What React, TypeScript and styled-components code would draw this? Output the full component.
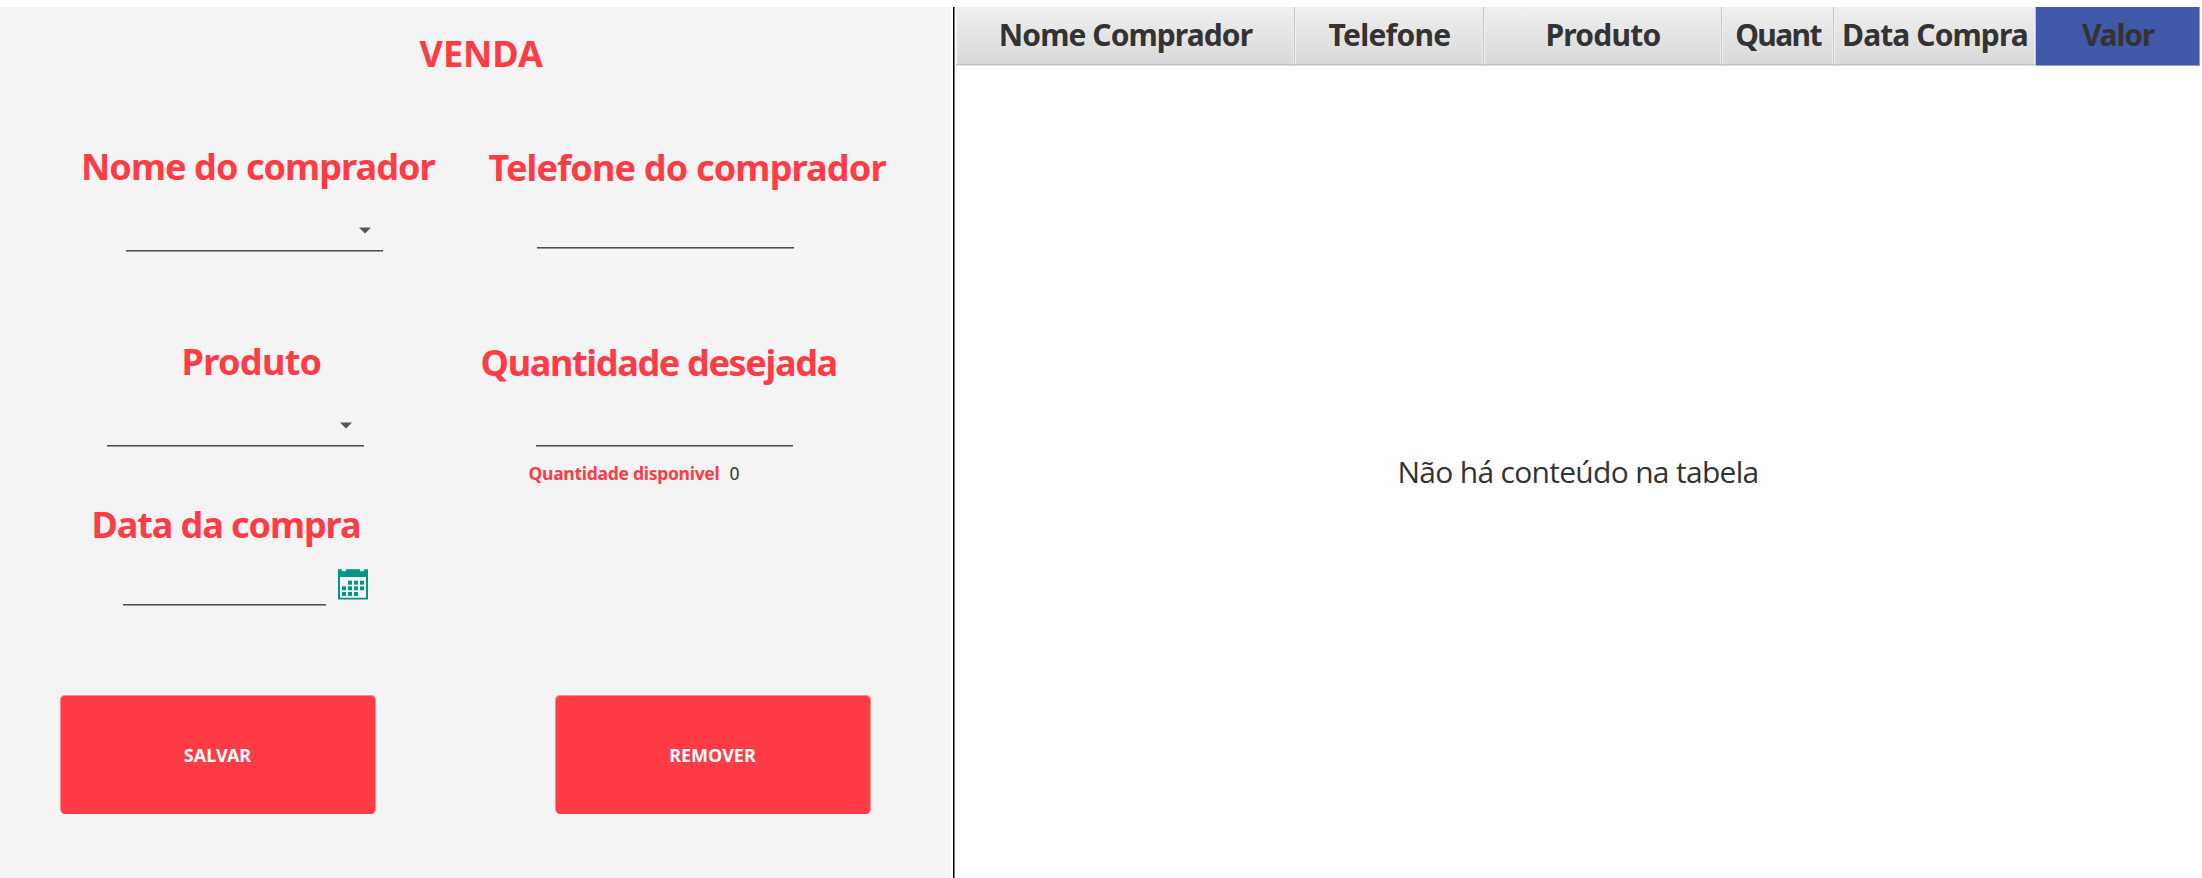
import React from "react";
import styled, { createGlobalStyle } from "styled-components";

const RED = "#ff3b46";

const GlobalStyle = createGlobalStyle`
  * { box-sizing: border-box; }
  body {
    margin: 0;
    background: #fff;
    color: #333;
    font-family: "Noto Sans", "Open Sans", sans-serif;
  }
`;

const Screen = styled.div`
  display: flex;
  height: 878px;
  padding-top: 7px;
  overflow: hidden;
`;

const FormPanel = styled.section`
  display: flex;
  flex-direction: column;
  flex: none;
  width: 951px;
  padding-top: 22px;
  background: #f4f4f4;
`;

const Divider = styled.div`
  flex: none;
  width: 2px;
  margin: 0 1px 0 2px;
  background: #000;
  border-right: 1px solid #777;
`;

const Heading = styled.h1<{ $left: number; $spacing?: number }>`
  margin: 0 0 0 ${(p) => p.$left}px;
  height: 48px;
  color: ${RED};
  font-size: 36px;
  font-weight: 700;
  line-height: 50px;
  letter-spacing: ${(p) => p.$spacing ?? 0}px;
  white-space: nowrap;
`;

const Columns = styled.div`
  display: grid;
  grid-template-columns: 470px 1fr;
  height: 618px;
`;

const Column = styled.div<{ $top: number }>`
  display: flex;
  flex-direction: column;
  padding-top: ${(p) => p.$top}px;
`;

const Field = styled.div<{ $height: number; $gap: number }>`
  display: flex;
  flex-direction: column;
  gap: ${(p) => p.$gap}px;
  height: ${(p) => p.$height}px;
`;

const Control = styled.div<{ $left: number; $width: number }>`
  display: flex;
  justify-content: flex-end;
  flex: none;
  width: ${(p) => p.$width}px;
  height: 38px;
  margin-left: ${(p) => p.$left}px;
  padding: 13px 12px 0 0;
  border-bottom: 1px solid #999;
  box-shadow: inset 0 -1px 0 #4d4d4d;
`;

const DateRow = styled.div`
  display: flex;
  align-items: flex-start;
  gap: 12px;
`;

const Stock = styled.div`
  display: flex;
  gap: 10px;
  margin: -10px 0 0 58.5px;
  font-size: 17.5px;
  line-height: 24px;
`;

const StockLabel = styled.span`
  color: ${RED};
  font-weight: 700;
  letter-spacing: -0.28px;
`;

const Actions = styled.div`
  display: flex;
  gap: 179px;
  padding-left: 60px;
`;

const ActionButton = styled.button`
  width: 316px;
  height: 119px;
  padding: 0 1px 0 0;
  border: 1px solid #fa8a90;
  border-bottom-color: ${RED};
  border-radius: 5px;
  background: ${RED};
  color: #fff;
  font: 700 18px/24px "Noto Sans", "Open Sans", sans-serif;
`;

const Table = styled.section`
  display: flex;
  flex-direction: column;
  flex: none;
  width: 1244px;
`;

const HeaderRow = styled.div`
  display: grid;
  grid-template-columns: 339px 189px 238px 112px 202px 164px;
  height: 59px;
`;

const HeaderCell = styled.div<{ $spacing: number; $active?: boolean }>`
  padding: 8px 0 0 1px;
  border-right: 1px solid ${(p) => (p.$active ? "#8f9cce" : "#c4c4c4")};
  border-bottom: 1px solid ${(p) => (p.$active ? "#97a3d0" : "#dedede")};
  background: ${(p) => (p.$active ? "#4059a9" : "linear-gradient(#efefef, #d9d9d9)")};
  box-shadow: ${(p) => (p.$active ? "none" : "inset 0 -1px 0 #c2c2c2, inset 1px 0 0 #f3f3f3, inset -1px 0 0 #ededed")};
  font-size: 30px;
  font-weight: 700;
  line-height: 40px;
  letter-spacing: ${(p) => p.$spacing}px;
  text-align: center;
  white-space: nowrap;
`;

const EmptyBody = styled.div`
  display: flex;
  flex: 1;
  align-items: center;
  justify-content: center;
  font-family: "Open Sans", "Noto Sans", sans-serif;
  font-size: 30px;
  font-weight: 400;
  line-height: 40px;
  letter-spacing: -0.7px;
`;

const Arrow = () => (
  <svg width="12" height="7" viewBox="0 0 12 7">
    <path d="M0 0.5H12L6 6.5Z" fill="#555" />
  </svg>
);

const days = [
  [10, 11.7], [16, 11.7], [22, 11.7],
  [4, 17.3], [10, 17.3], [16, 17.3], [22, 17.3],
  [4, 23], [10, 23], [16, 23],
];

const Calendar = styled.svg`
  flex: none;
  margin-top: 1px;
  fill: #009688;
`;

const CalendarIcon = () => (
  <Calendar width="30" height="31" viewBox="0 0 30 31">
    <path
      fillRule="evenodd"
      d="M0 0.3H4V1.4Q4 2.2 4.8 2.2H7.2Q8 2.2 8 1.4V0.3H22V1.4Q22 2.2 22.8 2.2H25.2Q26 2.2 26 1.4V0.3H30V30.6H0ZM2 8V28.8H28V8Z"
    />
    {days.map(([x, y]) => (
      <rect key={`${x}-${y}`} x={x} y={y} width="4" height="4" />
    ))}
  </Calendar>
);

const headers = [
  { label: "Nome Comprador", spacing: -0.92 },
  { label: "Telefone", spacing: -0.7 },
  { label: "Produto", spacing: -0.75 },
  { label: "Quant", spacing: -1.6 },
  { label: "Data Compra", spacing: -0.9 },
  { label: "Valor", spacing: -1.15, active: true },
];

export default function App() {
  return (
    <>
      <GlobalStyle />
      <Screen>
        <FormPanel>
          <Heading $left={419.5}>VENDA</Heading>
          <Columns>
            <Column $top={65}>
              <Field $height={195} $gap={24}>
                <Heading as="label" $left={81} $spacing={-0.93}>Nome do comprador</Heading>
                <Control $left={126} $width={257}><Arrow /></Control>
              </Field>
              <Field $height={163} $gap={24}>
                <Heading as="label" $left={181.5} $spacing={-0.65}>Produto</Heading>
                <Control $left={107} $width={257}><Arrow /></Control>
              </Field>
              <Field $height={120} $gap={20}>
                <Heading as="label" $left={91.5} $spacing={-1.08}>Data da compra</Heading>
                <DateRow>
                  <Control $left={123} $width={203} />
                  <CalendarIcon />
                </DateRow>
              </Field>
            </Column>
            <Column $top={66}>
              <Field $height={195} $gap={20}>
                <Heading as="label" $left={18.5} $spacing={-0.82}>Telefone do comprador</Heading>
                <Control $left={67} $width={257} />
              </Field>
              <Field $height={133} $gap={23}>
                <Heading as="label" $left={10.5} $spacing={-1.33}>Quantidade desejada</Heading>
                <Control $left={66} $width={257} />
              </Field>
              <Stock>
                <StockLabel>Quantidade disponivel</StockLabel>
                <span>0</span>
              </Stock>
            </Column>
          </Columns>
          <Actions>
            <ActionButton>SALVAR</ActionButton>
            <ActionButton>REMOVER</ActionButton>
          </Actions>
        </FormPanel>
        <Divider />
        <Table>
          <HeaderRow>
            {headers.map((h) => (
              <HeaderCell key={h.label} $spacing={h.spacing} $active={h.active}>{h.label}</HeaderCell>
            ))}
          </HeaderRow>
          <EmptyBody>Não há conteúdo na tabela</EmptyBody>
        </Table>
      </Screen>
    </>
  );
}
